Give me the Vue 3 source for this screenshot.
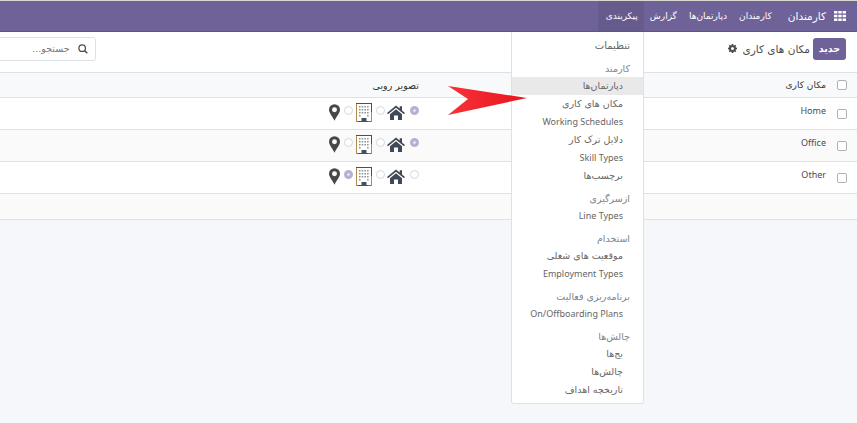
<script setup>
const navItems = ['کارمندان', 'دپارتمان‌ها', 'گزارش', 'پیکربندی']

const menu = [
  { title: 'تنظیمات', top: true },
  { head: 'کارمند', items: ['دپارتمان‌ها', 'مکان های کاری', 'Working Schedules', 'دلایل ترک کار', 'Skill Types', 'برچسب‌ها'] },
  { head: 'ازسرگیری', items: ['Line Types'] },
  { head: 'استخدام', items: ['موقعیت های شغلی', 'Employment Types'] },
  { head: 'برنامه‌ریزی فعالیت', items: ['On/Offboarding Plans'] },
  { head: 'چالش‌ها', items: ['بج‌ها', 'چالش‌ها', 'تاریخچه اهداف'] }
]

const rows = [
  { name: 'Home', picked: 0 },
  { name: 'Office', picked: 0 },
  { name: 'Other', picked: 1 }
]

const isLatin = (text) => /[a-z]/i.test(text)
</script>

<template>
  <div class="screen">
    <div class="page">
      <header class="navbar">
        <svg class="apps" viewBox="0 0 12 10" width="12" height="10">
          <path d="M0 0h3.4v2.6H0zM4.3 0h3.4v2.6H4.3zM8.6 0H12v2.6H8.6zM0 3.7h3.4v2.6H0zM4.3 3.7h3.4v2.6H4.3zM8.6 3.7H12v2.6H8.6zM0 7.4h3.4V10H0zM4.3 7.4h3.4V10H4.3zM8.6 7.4H12V10H8.6z" fill="#fff" />
        </svg>
        <span class="brand">کارمندان</span>
        <a v-for="(item, i) in navItems" :key="item" class="nav-link" :class="{ open: i === 3 }">{{ item }}</a>
      </header>

      <section class="panel">
        <button class="btn-new">جدید</button>
        <span class="title">مکان های کاری</span>
        <span class="gear">
          <svg viewBox="0 0 12 12" width="9" height="9">
            <path d="M5 0h2l.3 1.6 1 .4L9.700 1.100 11 2.400l-.9 1.400.4 1L12 5v2l-1.500.3-.4 1 .9 1.300L9.600 11l-1.300-.9-1 .4L7 12H5l-.3-1.500-1-.4-1.300.9L1 9.600l.9-1.300-.4-1L0 7V5l1.500-.3.4-1L1 2.400 2.400 1l1.300.9 1-.4z" fill="#4c4c4c" fill-rule="evenodd" />
            <circle cx="6" cy="6" r="2" fill="#fff" />
          </svg>
        </span>
        <div class="search">
          <svg class="lens" viewBox="0 0 12 12" width="10" height="10">
            <circle cx="5" cy="5" r="3.900" fill="none" stroke="#4c4c4c" stroke-width="1.500" />
            <path d="M8 8l3.200 3.200" stroke="#4c4c4c" stroke-width="1.700" />
          </svg>
          <span class="placeholder">جستجو...</span>
        </div>
      </section>

      <div class="table">
        <div class="line head">
          <span class="check"><i class="box"></i></span>
          <span class="name">مکان کاری</span>
          <span class="image-head">تصویر روبی</span>
        </div>
        <div v-for="(row, r) in rows" :key="row.name" class="line" :class="{ alt: r === 1 }">
          <span class="check"><i class="box"></i></span>
          <span class="name">{{ row.name }}</span>
          <div class="choices">
            <i class="radio" :class="{ on: row.picked === 0 }"></i>
            <svg class="home" viewBox="0 0 18 15" width="18" height="15">
              <path d="M9 .4 0 8l1 1.300L9 2.700l8 6.600L18 8l-3-2.500V1.200h-2.300v2.400z" fill="#3f4a55" />
              <path d="M3 9.300 9 4.200l6 5.100V15h-4v-4.500H7V15H3z" fill="#3f4a55" />
            </svg>
            <i class="radio"></i>
            <svg class="office" viewBox="0 0 16 19" width="16" height="19">
              <rect x=".5" y=".5" width="15" height="18" fill="#fff" stroke="#47515c" />
              <path d="M.5 1v18h2" fill="none" stroke="#b58a4e" />
              <path d="M15.500 9v10H12" fill="none" stroke="#b58a4e" />
              <path d="M3 3h1.500v1.500H3zM5.700 3h1.500v1.500H5.700zM8.400 3h1.500v1.500H8.400zM11.100 3h1.500v1.500h-1.500zM3 6h1.500v1.500H3zM5.700 6h1.500v1.500H5.700zM8.400 6h1.500v1.500H8.400zM11.100 6h1.500v1.500h-1.500zM3 9h1.500v1.500H3zM5.700 9h1.500v1.500H5.700zM8.400 9h1.500v1.500H8.400zM11.100 9h1.500v1.500h-1.500zM3 12h1.500v1.500H3zM11.100 12h1.500v1.500h-1.500z" fill="#8b8f94" />
              <path d="M5.500 15h5v4h-5z" fill="#47515c" />
            </svg>
            <i class="radio" :class="{ on: row.picked === 1 }"></i>
            <svg class="pin" viewBox="0 0 12 18" width="11" height="17">
              <path d="M6 0a6 6 0 0 0-6 6c0 3.600 4 7.400 6 12 2-4.600 6-8.400 6-12a6 6 0 0 0-6-6zm0 3.300a2.700 2.700 0 1 1 0 5.400 2.700 2.700 0 0 1 0-5.400z" fill="#47474b" />
            </svg>
          </div>
        </div>
        <div class="line foot"></div>
      </div>
    </div>

    <nav class="dropdown">
      <template v-for="group in menu" :key="group.title || group.head">
        <a v-if="group.top" class="top-item">{{ group.title }}</a>
        <div v-else class="group">
          <div class="group-head">{{ group.head }}</div>
          <a
            v-for="(item, i) in group.items"
            :key="item"
            class="item"
            :class="{ hover: group.head === 'کارمند' && i === 0, latin: isLatin(item) }"
          >{{ item }}</a>
        </div>
      </template>
    </nav>

    <svg class="arrow" viewBox="0 0 82 32" width="82" height="32">
      <defs>
        <linearGradient id="red" x1="0" y1="0" x2="1" y2="0">
          <stop offset="0" stop-color="#f7323a" />
          <stop offset="1" stop-color="#e8141d" />
        </linearGradient>
      </defs>
      <path d="M1 1 80 13 1 30 21 14z" fill="url(#red)" />
    </svg>
  </div>
</template>

<style>
html, body {
  margin: 0;
  background: #f5f6f8;
}
</style>

<style scoped>
.screen {
  position: relative;
  width: 857px;
  height: 423px;
  overflow: hidden;
  direction: rtl;
  font-family: "DejaVu Sans", "Noto Sans", sans-serif;
  font-size: 10px;
  color: #4c4c4c;
  background: #f6f7fa;
}
.page {
  width: 857px;
  border-top: 1px solid #d9d9d2;
}
.navbar {
  display: flex;
  align-items: center;
  height: 30px;
  padding-right: 11px;
  background: #6f6298;
  border-bottom: 1px solid #5f5483;
  color: #fff;
}
.apps {
  margin-left: 8px;
}
.brand {
  font-size: 10.500px;
  margin-left: 10px;
}
.nav-link {
  display: flex;
  align-items: center;
  height: 30px;
  padding: 0 6px;
  font-size: 9px;
}
.nav-link.open {
  padding-left: 8px;
  background: #675b8d;
}
.panel {
  display: flex;
  align-items: center;
  height: 41px;
  padding: 0 11px 7px 0;
  background: #fff;
  box-sizing: border-box;
  border-bottom: 1px solid #dee2e6;
}
.panel > * {
  flex-shrink: 0;
}
.btn-new {
  width: 33px;
  height: 22px;
  padding: 0;
  border: 0;
  border-radius: 3px;
  background: #6f6298;
  color: #fff;
  font: bold 9.500px "DejaVu Sans", sans-serif;
}
.title {
  margin-right: 3px;
  font-size: 10.500px;
  white-space: nowrap;
}
.gear {
  display: flex;
  margin-right: 6px;
}
.search {
  display: flex;
  align-items: center;
  width: 300px;
  height: 24px;
  box-sizing: border-box;
  margin-right: 632px;
  padding-right: 7px;
  border: 1px solid #dee2e6;
  border-radius: 3px;
  background: #fff;
}
.placeholder {
  margin-right: 8px;
  font-size: 9.500px;
  color: #777;
}
.table {
  background: #fff;
}
.line {
  display: grid;
  grid-template-columns: 31px 407px 1fr;
  align-items: center;
  height: 32px;
  box-sizing: border-box;
  border-bottom: 1px solid #dee2e6;
  background: #fff;
}
.line.alt {
  background: #fafafa;
}
.line.head {
  height: 25px;
  background: #f8f9fa;
  font-weight: 500;
}
.line.foot {
  height: 26px;
  background: #fafafa;
}
.check {
  display: flex;
  justify-content: center;
}
.box {
  display: block;
  width: 8px;
  height: 8px;
  border: 1px solid #aeb2b7;
  border-radius: 2px;
  background: #fff;
}
.name {
  font-family: "Noto Sans", "DejaVu Sans", sans-serif;
  font-size: 9px;
  margin-top: -6px;
}
.head .name,
.image-head {
  font-family: "DejaVu Sans", sans-serif;
  font-size: 9.500px;
  color: #333;
}
.head .name {
  margin-top: 0;
  font-size: 9px;
}
.choices {
  display: flex;
  align-items: center;
  margin-top: -2px;
}
.radio {
  display: block;
  flex-shrink: 0;
  width: 7px;
  height: 7px;
  margin-top: -4px;
  border: 1px solid #d6d6dc;
  border-radius: 50%;
  background: #fff;
}
.radio.on {
  box-sizing: content-box;
  width: 3px;
  height: 3px;
  border: 3px solid #b8b0cf;
  background: #e4e0ee;
}
.home {
  margin: -1px 5px 0 2px;
}
.office {
  margin: 0 4px 0 3px;
}
.pin {
  margin-right: 4px;
}
.dropdown {
  position: absolute;
  top: 32px;
  left: 511px;
  width: 133px;
  height: 372px;
  box-sizing: border-box;
  padding-top: 5px;
  background: #fff;
  border: 1px solid #dee2e6;
  border-top: 0;
  border-radius: 0 0 3px 3px;
}
.top-item {
  display: block;
  height: 18px;
  line-height: 18px;
  padding-right: 13px;
  color: #666;
}
.group {
  margin-top: 6px;
}
.group-head {
  height: 16px;
  line-height: 16px;
  padding-right: 13px;
  color: #7c848b;
  font-size: 9.500px;
}
.item {
  display: block;
  height: 18px;
  line-height: 18px;
  padding-right: 20px;
  font-size: 9.500px;
  color: #666;
  white-space: nowrap;
}
.item.latin {
  font-family: "Noto Sans", "DejaVu Sans", sans-serif;
  font-size: 9px;
}
.item.hover {
  background: #e9e9e9;
}
.arrow {
  position: absolute;
  top: 85px;
  left: 447px;
}
</style>
